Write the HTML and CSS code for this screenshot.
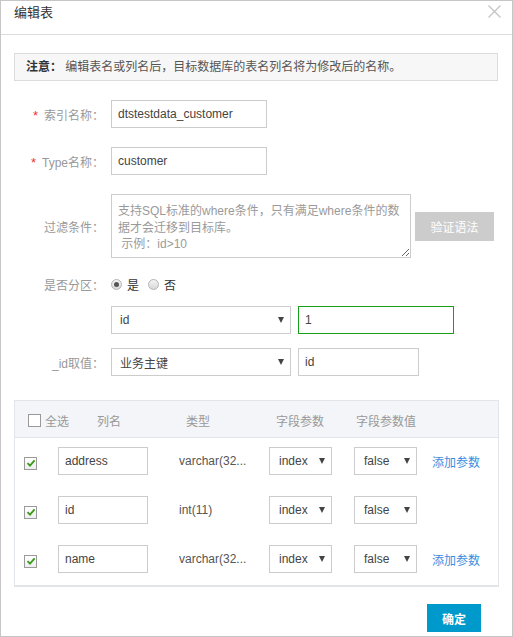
FILE: index.html
```html
<!DOCTYPE html>
<html lang="zh-CN">
<head>
<meta charset="utf-8">
<title>编辑表</title>
<link rel="stylesheet" href="styles.css">
</head>
<body>
<div class="dialog">
  <div class="dlg-head">
    <span class="title">编辑表</span>
    <svg class="close" width="13" height="13" viewBox="0 0 13 13"><path d="M0.5 0.5L12.5 12.5M12.5 0.5L0.5 12.5" stroke="#c4c4c4" stroke-width="1.3" fill="none"/></svg>
  </div>
  <div class="dlg-body">
    <div class="notice"><b>注意：</b> 编辑表名或列名后，目标数据库的表名列名将为修改后的名称。</div>

    <div class="form">
      <div class="row r1">
        <label class="lbl"><span class="req">*</span>索引名称：</label>
        <input class="inp w156" type="text" value="dtstestdata_customer">
      </div>
      <div class="row r2">
        <label class="lbl"><span class="req">*</span>Type名称：</label>
        <input class="inp w156" type="text" value="customer">
      </div>
      <div class="row r3">
        <label class="lbl">过滤条件：</label>
        <textarea class="ta" placeholder="支持SQL标准的where条件，只有满足where条件的数据才会迁移到目标库。&#10; 示例：id&gt;10"></textarea>
        <button class="btn-verify" type="button">验证语法</button>
      </div>
      <div class="row r4">
        <label class="lbl">是否分区：</label>
        <span class="radio on"></span><span class="rtxt">是</span>
        <span class="radio"></span><span class="rtxt">否</span>
      </div>
      <div class="row r5">
        <span class="lbl"></span>
        <div class="sel w180"><span>id</span><i class="caret"></i></div>
        <input class="inp w156 focus" type="text" value="1">
      </div>
      <div class="row r6">
        <label class="lbl">_id取值：</label>
        <div class="sel w180"><span>业务主键</span><i class="caret"></i></div>
        <input class="inp w121" type="text" value="id">
      </div>
    </div>

    <div class="tbl">
      <div class="thead">
        <div class="h-all"><span class="cb"></span>全选</div>
        <div class="h-name">列名</div>
        <div class="h-type">类型</div>
        <div class="h-p">字段参数</div>
        <div class="h-pv">字段参数值</div>
      </div>
      <div class="trow">
        <div class="c-chk"><span class="cb checked"><svg width="10" height="10" viewBox="0 0 10 10"><path d="M1.5 5.2L4 7.6L8.6 2.4" stroke="#3a9a1a" stroke-width="1.8" fill="none"/></svg></span></div>
        <div class="c-name"><input class="inp w90" type="text" value="address"></div>
        <div class="c-type">varchar(32...</div>
        <div class="sel w63 s1"><span>index</span><i class="caret"></i></div>
        <div class="sel w63 s2"><span>false</span><i class="caret"></i></div>
        <a class="link" href="#">添加参数</a>
      </div>
      <div class="trow">
        <div class="c-chk"><span class="cb checked"><svg width="10" height="10" viewBox="0 0 10 10"><path d="M1.5 5.2L4 7.6L8.6 2.4" stroke="#3a9a1a" stroke-width="1.8" fill="none"/></svg></span></div>
        <div class="c-name"><input class="inp w90" type="text" value="id"></div>
        <div class="c-type">int(11)</div>
        <div class="sel w63 s1"><span>index</span><i class="caret"></i></div>
        <div class="sel w63 s2"><span>false</span><i class="caret"></i></div>
      </div>
      <div class="trow">
        <div class="c-chk"><span class="cb checked"><svg width="10" height="10" viewBox="0 0 10 10"><path d="M1.5 5.2L4 7.6L8.6 2.4" stroke="#3a9a1a" stroke-width="1.8" fill="none"/></svg></span></div>
        <div class="c-name"><input class="inp w90" type="text" value="name"></div>
        <div class="c-type">varchar(32...</div>
        <div class="sel w63 s1"><span>index</span><i class="caret"></i></div>
        <div class="sel w63 s2"><span>false</span><i class="caret"></i></div>
        <a class="link" href="#">添加参数</a>
      </div>
    </div>

    <div class="foot">
      <button class="btn-ok" type="button">确定</button>
    </div>
  </div>
</div>
</body>
</html>
```

FILE: styles.css
```css
* { box-sizing: border-box; }
html, body { margin: 0; padding: 0; background: #fff; }
body {
  font-family: "Liberation Sans", "Noto Sans CJK SC", sans-serif;
  font-size: 12px;
  color: #333;
}
.dialog {
  width: 513px;
  height: 637px;
  border: 1px solid #c6c6c6;
  background: #fff;
}
.dlg-head {
  height: 34px;
  border-bottom: 1px solid #dcdcdc;
  display: flex;
  justify-content: space-between;
  align-items: flex-start;
  padding: 0 11px 0 13px;
}
.title {
  font-size: 13px;
  line-height: 18px;
  padding-top: 3px;
  color: #333;
}
.close { margin-top: 4px; }

.dlg-body { padding: 18px 14px 0 13px; }

.notice {
  height: 28px;
  border: 1px solid #dcdcdc;
  background: #f7f7f7;
  padding-left: 11px;
  line-height: 26px;
  color: #555;
}
.notice b { color: #333; }

.form { margin-top: 19px; }
.row { display: flex; align-items: center; }
.r1, .r2 { height: 28px; margin-bottom: 19px; }
.r3 { height: 64px; margin-bottom: 12px; }
.r4 { height: 28px; margin-bottom: 8px; }
.r5 { height: 28px; margin-bottom: 14px; }
.r6 { height: 28px; margin-bottom: 24px; }

.lbl {
  width: 90px;
  margin-right: 7px;
  text-align: right;
  color: #999;
  white-space: nowrap;
  flex: none;
}
.req { color: #f0322d; margin-right: 6px; font-size: 13px; }

.inp {
  height: 28px;
  border: 1px solid #ccc;
  padding: 0 6px;
  font: inherit;
  font-size: 12px;
  color: #444;
  outline: none;
  background: #fff;
  flex: none;
}
.w156 { width: 156px; }
.w121 { width: 121px; }
.w90 { width: 90px; }
.inp.focus { border-color: #17a017; }

.ta {
  width: 300px;
  height: 64px;
  border: 1px solid #ccc;
  padding: 8px 6px 4px;
  font: inherit;
  font-size: 12px;
  line-height: 16.5px;
  color: #444;
  resize: both;
  outline: none;
  flex: none;
}
.ta::placeholder { color: #9a9a9a; }
.btn-verify {
  margin-left: 4px;
  width: 79px;
  height: 29px;
  border: none;
  background: #cccccc;
  color: #fff;
  font: inherit;
  font-size: 12px;
  padding: 0;
}

.radio {
  width: 11px;
  height: 11px;
  border-radius: 50%;
  border: 1px solid #b4b4b4;
  background: linear-gradient(#f4f4f4, #d8d8d8);
  position: relative;
  flex: none;
}
.radio.on::after {
  content: "";
  position: absolute;
  left: 2px; top: 2px;
  width: 5px; height: 5px;
  border-radius: 50%;
  background: #555;
}
.rtxt { margin-left: 5px; margin-right: 9px; color: #333; }

.sel {
  height: 28px;
  border: 1px solid #ccc;
  display: flex;
  align-items: center;
  justify-content: space-between;
  padding: 0 6px 0 8px;
  color: #444;
  background: #fff;
  flex: none;
}
.w180 { width: 180px; margin-right: 7px; }
.w63 { width: 63px; padding-left: 9px; }
.s1 { margin-right: 22px; }
.s2 { margin-right: 15px; }
.caret {
  width: 0; height: 0;
  border-left: 3px solid transparent;
  border-right: 3px solid transparent;
  border-top: 6px solid #444;
}

.tbl {
  width: 485px;
  border: 1px solid #e1e5ea;
  border-bottom-width: 2px;
}
.thead {
  height: 37px;
  background: #f3f5f8;
  border-bottom: 1px solid #e1e5ea;
  display: flex;
  align-items: center;
  padding-top: 3px;
  color: #999;
}
.h-all { width: 82px; padding-left: 13px; display: flex; align-items: center; }
.h-all .cb { margin-right: 4px; }
.h-name { width: 89px; }
.h-type { width: 90px; }
.h-p { width: 80px; }

.cb {
  width: 13px;
  height: 13px;
  border: 1px solid #999;
  background: #fff;
  display: inline-flex;
  align-items: center;
  justify-content: center;
  flex: none;
}
.trow {
  height: 49px;
  padding: 9px 0 12px;
  display: flex;
  align-items: center;
}
.c-chk { width: 43px; padding-left: 9px; padding-top: 4px; display: flex; }
.c-chk .cb { width: 13px; height: 13px; border-color: #9a9a9a; background: linear-gradient(#fff, #eee); }
.c-name { width: 121px; }
.c-type { width: 90px; color: #555; }
.link { color: #3a8de0; text-decoration: none; }

.foot {
  display: flex;
  justify-content: flex-end;
  padding: 17px 17px 0 0;
}
.btn-ok {
  width: 54px;
  height: 28px;
  border: none;
  background: #0099cc;
  color: #fff;
  font: inherit;
  font-size: 12px;
  font-weight: bold;
  padding: 0;
}
```
